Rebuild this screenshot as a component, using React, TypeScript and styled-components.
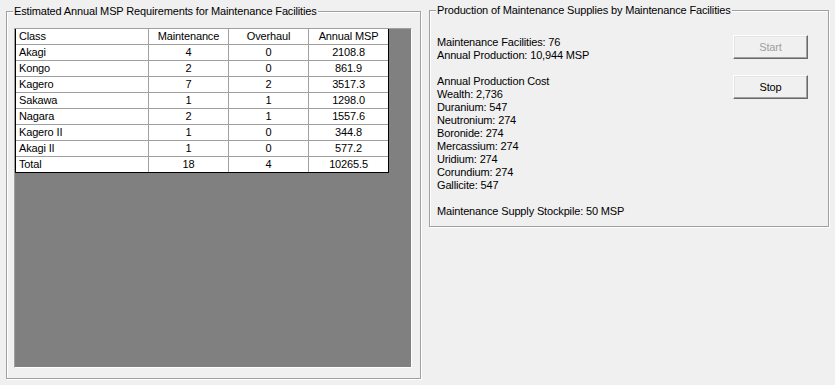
import React from "react";
import styled, { createGlobalStyle } from "styled-components";

const GlobalStyle = createGlobalStyle`
  html, body {
    margin: 0;
    padding: 0;
    background: #f0f0f0;
  }
  body {
    font-family: "Liberation Sans", Arial, sans-serif;
    font-size: 11px;
    letter-spacing: -0.15px;
    color: #000;
  }
`;

const Window = styled.div`
  display: flex;
  align-items: flex-start;
  gap: 8px;
  padding: 4px 0 0 6px;
  width: 835px;
  height: 385px;
  box-sizing: border-box;
`;

const GroupBox = styled.fieldset<{ $w: number; $top?: number }>`
  margin: ${(p) => p.$top ?? 0}px 0 0 0;
  min-width: 0;
  width: ${(p) => p.$w}px;
  box-sizing: border-box;
  border: 1px solid #a0a0a0;
  box-shadow: inset 1px 1px 0 #fff, 1px 1px 0 #fff;
`;

const LeftGroup = styled(GroupBox)`
  padding: 10px 8px 10px 7px;
`;

const RightGroup = styled(GroupBox)`
  padding: 19px 20px 8px 7px;
  display: flex;
  justify-content: space-between;
  align-items: flex-start;
`;

const Legend = styled.legend`
  padding: 0 1px;
  margin-left: -1px;
  line-height: 13px;
  font-size: 11px;
  background: #f0f0f0;
  white-space: nowrap;
`;

const GridPanel = styled.div`
  width: 398px;
  height: 340px;
  box-sizing: border-box;
  background: #808080;
  border-style: solid;
  border-width: 1px;
  border-color: #a0a0a0 #fff #fff #a0a0a0;
`;

const Table = styled.div`
  display: grid;
  grid-template-columns: 133px 80px 80px 79px;
  width: max-content;
  background: #fff;
  border-left: 1px solid #000;
  border-right: 1px solid #000;
  border-bottom: 1px solid #000;
`;

const Cell = styled.div<{ $align: "left" | "center"; $lastCol?: boolean; $lastRow?: boolean }>`
  height: ${(p) => (p.$lastRow ? 15 : 16)}px;
  box-sizing: border-box;
  line-height: 15px;
  padding: 0 3px;
  text-align: ${(p) => p.$align};
  border-right: ${(p) => (p.$lastCol ? "none" : "1px solid #a0a0a0")};
  border-bottom: ${(p) => (p.$lastRow ? "none" : "1px solid #a0a0a0")};
  white-space: nowrap;
  overflow: hidden;
`;

const TextColumn = styled.div`
  display: flex;
  flex-direction: column;
  gap: 13px;
`;

const TextBlock = styled.div`
  line-height: 13px;
  white-space: nowrap;
`;

const ButtonColumn = styled.div`
  display: flex;
  flex-direction: column;
  gap: 16px;
  margin-top: -1px;
`;

const WinButton = styled.button`
  width: 75px;
  height: 24px;
  box-sizing: border-box;
  margin: 0;
  padding: 0;
  font-family: "Liberation Sans", Arial, sans-serif;
  font-size: 11px;
  letter-spacing: -0.15px;
  color: #000;
  background: #f0f0f0;
  border-style: solid;
  border-width: 1px;
  border-color: #fff #696969 #696969 #fff;
  box-shadow: inset -1px -1px 0 #a0a0a0, inset 1px 1px 0 #e3e3e3;
  &:disabled {
    color: #a0a0a0;
  }
`;

const rows: [string, string, string, string][] = [
  ["Akagi", "4", "0", "2108.8"],
  ["Kongo", "2", "0", "861.9"],
  ["Kagero", "7", "2", "3517.3"],
  ["Sakawa", "1", "1", "1298.0"],
  ["Nagara", "2", "1", "1557.6"],
  ["Kagero II", "1", "0", "344.8"],
  ["Akagi II", "1", "0", "577.2"],
  ["Total", "18", "4", "10265.5"],
];

const header: [string, string, string, string] = ["Class", "Maintenance", "Overhaul", "Annual MSP"];

export default function App() {
  const all = [header, ...rows];
  return (
    <>
      <GlobalStyle />
      <Window>
        <LeftGroup $w={415} $top={1}>
          <Legend>Estimated Annual MSP Requirements for Maintenance Facilities</Legend>
          <GridPanel>
            <Table>
              {all.map((r, ri) =>
                r.map((c, ci) => (
                  <Cell
                    key={`${ri}-${ci}`}
                    $align={ci === 0 ? "left" : "center"}
                    $lastCol={ci === 3}
                    $lastRow={ri === all.length - 1}
                  >
                    {c}
                  </Cell>
                ))
              )}
            </Table>
          </GridPanel>
        </LeftGroup>
        <RightGroup $w={400}>
          <Legend>Production of Maintenance Supplies by Maintenance Facilities</Legend>
          <TextColumn>
            <TextBlock>
              Maintenance Facilities: 76
              <br />
              Annual Production: 10,944 MSP
            </TextBlock>
            <TextBlock>
              Annual Production Cost
              <br />
              Wealth: 2,736
              <br />
              Duranium: 547
              <br />
              Neutronium: 274
              <br />
              Boronide: 274
              <br />
              Mercassium: 274
              <br />
              Uridium: 274
              <br />
              Corundium: 274
              <br />
              Gallicite: 547
            </TextBlock>
            <TextBlock>Maintenance Supply Stockpile: 50 MSP</TextBlock>
          </TextColumn>
          <ButtonColumn>
            <WinButton disabled>Start</WinButton>
            <WinButton>Stop</WinButton>
          </ButtonColumn>
        </RightGroup>
      </Window>
    </>
  );
}
